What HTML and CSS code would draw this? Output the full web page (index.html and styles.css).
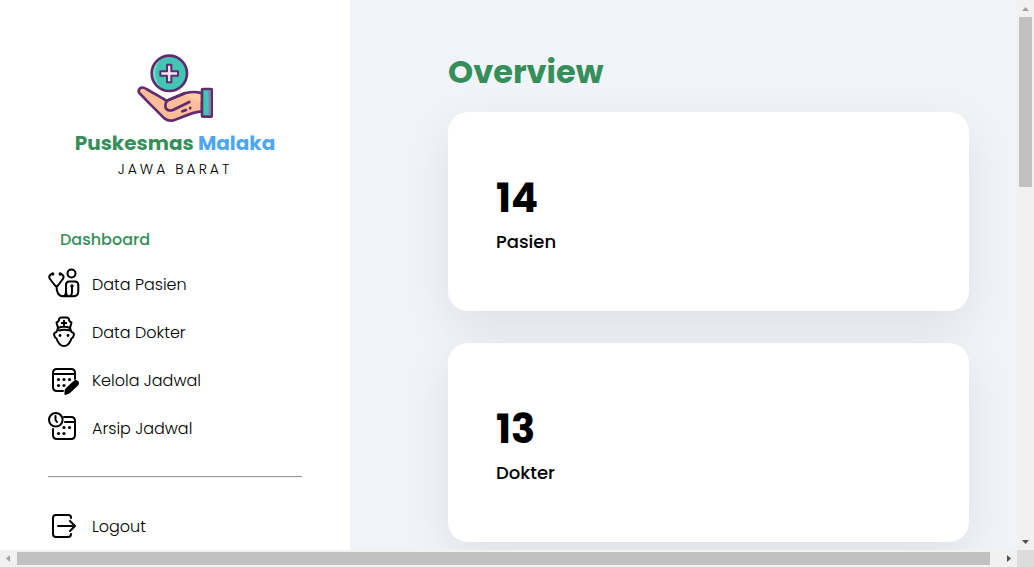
FILE: index.html
```html
<!DOCTYPE html>
<html lang="id">
<head>
<meta charset="utf-8">
<title>Puskesmas Malaka</title>
<link rel="stylesheet" href="styles.css">
</head>
<body>
<div class="frame">
  <div class="page">
    <aside class="sidebar">
      <header class="brand">
        <svg class="logo" viewBox="36 24 228 210" fill="none" stroke="#5f2c6d" stroke-width="8" stroke-linecap="round" stroke-linejoin="round" aria-hidden="true">
          <circle cx="133" cy="85" r="53" fill="#43c5b6"/>
          <path d="M105 46A48 48 0 0 0 105 124A60 60 0 0 1 105 46Z" fill="#7fdccc" stroke="none"/>
          <path d="M126 59h13v20h20v13h-20v20h-13V92h-20V79h20Z" fill="#f3e4f5" stroke-width="6"/>
          <path d="M45 130C51 125 58 128 64 132L108 157C114 160 120 164 124 168L180 145Q207 138 231 145V199C195 201 170 220 145 226Q130 229 118 220L73 175L43 144Q38 137 45 130Z" fill="#ffbd99"/>
          <path d="M180 149Q207 142 227 149V172C210 165 194 158 180 149Z" fill="#ffcda8" stroke="none"/>
          <path d="M193 171L144 195C132 199 121 195 121 182Q121 170 132 164L180 144"/>
          <path d="M172 199l11-4M195 190l1-1"/>
          <path d="M231 134Q231 132 234 132H257Q261 132 261 136V211Q261 215 257 215H234Q231 215 231 211Z" fill="#43c5b6"/>
          <path d="M251 136h6v75h-6Z" fill="#9274ad" stroke="none"/>
        </svg>
        <h2 class="brand-name">Puskesmas <span class="brand-accent">Malaka</span></h2>
        <p class="brand-region">JAWA BARAT</p>
      </header>
      <nav class="menu">
        <a class="menu-title" href="#">Dashboard</a>
        <a class="menu-item" href="#">
          <svg class="icon" viewBox="0 0 32 32" aria-hidden="true">
            <path d="M4.500 6C1.500 6 0.500 9 2 11L7 17.500Q8.500 19 10 17.500L14.800 11C16.500 9 15 6 12.300 6"/>
            <path d="M8.500 18.500C8.500 25 11 28.300 15.500 28.300H25Q30.300 28.300 30.300 23.500V17Q30.300 13.500 27 13.500H21Q18 13.500 18 17V23Q18 28.300 21 28.300Q24 28.300 24 23V18M15.500 28.300Q18 27.500 18 23"/>
            <circle cx="23.500" cy="5.500" r="4"/>
            <circle class="dot" cx="24" cy="18" r="1.700"/><circle class="dot" cx="4.700" cy="6" r="1.700"/><circle class="dot" cx="12.300" cy="6" r="1.700"/>
          </svg>
          Data Pasien</a>
        <a class="menu-item" href="#">
          <svg class="icon" viewBox="0 0 32 32" aria-hidden="true">
            <path d="M10 12L8.500 6.500Q11 5.500 11 3.500Q11.500 1.500 13.500 1.500H18.500Q20.500 1.500 21 3.500Q21 5.500 23.500 6.500L22 12Q16 9.500 10 12ZM16 4.800v4.400M13.800 7h4.400"/>
            <path d="M10 12L8.500 16Q5 17 6.500 20Q7 22 8.500 22.500C10 27 13 30 16 30S22 27 23.500 22.500Q25 22 25.500 20Q27 17 23.500 16L22 12M11 14.500Q16 13 22 14.500"/>
            <circle class="dot" cx="12" cy="19.500" r="1.400"/><circle class="dot" cx="20" cy="19.500" r="1.400"/>
          </svg>
          Data Dokter</a>
        <a class="menu-item" href="#">
          <svg class="icon" viewBox="0 0 32 32" aria-hidden="true">
            <path d="M15 27H9Q5 27 5 23V9Q5 5 9 5H23Q27 5 27 9V15M5 10H27"/>
            <circle class="dot" cx="10.500" cy="15.500" r="1.600"/><circle class="dot" cx="16" cy="15.500" r="1.600"/><circle class="dot" cx="21.500" cy="15.500" r="1.600"/>
            <circle class="dot" cx="10.500" cy="21.500" r="1.600"/><circle class="dot" cx="16" cy="21.500" r="1.600"/>
            <path class="dot" d="M16.500 31V27Q16.500 25.500 18 24L25.500 17Q28 15 30 17T30 21.500L22 29Q20.500 30.500 16.500 31Z"/>
          </svg>
          Kelola Jadwal</a>
        <a class="menu-item" href="#">
          <svg class="icon" viewBox="0 0 32 32" aria-hidden="true">
            <circle cx="7.800" cy="7.800" r="6.800"/>
            <path d="M7.500 4V8L9 10M16 5H23Q27 5 27 9V23Q27 27 23 27H9Q5 27 5 23V17M17 10H27"/>
            <circle class="dot" cx="16" cy="15.500" r="1.600"/><circle class="dot" cx="21.500" cy="15.500" r="1.600"/>
            <circle class="dot" cx="10.500" cy="21.500" r="1.600"/><circle class="dot" cx="16" cy="21.500" r="1.600"/>
          </svg>
          Arsip Jadwal</a>
        <hr class="divider">
        <a class="menu-item" href="#">
          <svg class="icon" viewBox="0 0 32 32" aria-hidden="true">
            <path d="M23 8V7.500Q23 5 20.500 5H8Q5 5 5 8V24Q5 27 8 27H20Q23 27 23 24M10 16H27M22 11L27 16L22 21"/>
          </svg>
          Logout</a>
      </nav>
    </aside>
    <main class="content">
      <h1 class="heading">Overview</h1>
      <section class="card"><strong class="count">14</strong><span class="label">Pasien</span></section>
      <section class="card"><strong class="count">13</strong><span class="label">Dokter</span></section>
    </main>
  </div>
  <div class="bar bar-vertical" aria-hidden="true">
    <svg class="arrow" viewBox="0 0 17 17"><path fill="#a3a3a3" d="M5 11L8.500 7L12 11Z"/></svg>
    <div class="track"><div class="thumb"></div></div>
    <svg class="arrow" viewBox="0 0 17 17"><path fill="#505050" d="M5 7L8.500 11L12 7Z"/></svg>
  </div>
  <div class="bar bar-horizontal" aria-hidden="true">
    <svg class="arrow" viewBox="0 0 17 17"><path fill="#a3a3a3" d="M10 5L6 8.500L10 12Z"/></svg>
    <div class="track"><div class="thumb"></div></div>
    <svg class="arrow" viewBox="0 0 17 17"><path fill="#505050" d="M7 5L11 8.500L7 12Z"/></svg>
  </div>
  <div class="corner"></div>
</div>
</body>
</html>
```
FILE: styles.css
```css
* {
  box-sizing: border-box;
  margin: 0;
  padding: 0;
}

body {
  font-family: Poppins, Inter, "Open Sans", sans-serif;
  font-size: 16px;
  color: #000;
}

.frame {
  display: grid;
  grid-template-columns: minmax(0, 1fr) 17px;
  grid-template-rows: minmax(0, 1fr) 17px;
  height: 100vh;
}

.page {
  display: flex;
  overflow: hidden;
  background: #f0f4f9;
}

.sidebar {
  flex: 0 0 350px;
  padding: 52px 48px 0;
  background: #fff;
}

.brand {
  display: flex;
  flex-direction: column;
  align-items: center;
}

.logo {
  width: 76px;
  height: 72px;
}

.brand-name {
  font-size: 20px;
  font-weight: 700;
  line-height: 38px;
  white-space: nowrap;
  color: #368f5b;
}

.brand-accent {
  color: #4da6f0;
}

.brand-region {
  font-size: 14px;
  font-weight: 300;
  line-height: 14px;
  letter-spacing: 3px;
}

.menu {
  display: flex;
  flex-direction: column;
  margin-top: 52px;
}

.menu-title {
  padding: 0 12px;
  font-weight: 500;
  line-height: 24px;
  color: #368f5b;
  text-decoration: none;
}

.menu-item {
  display: flex;
  align-items: center;
  gap: 12px;
  height: 32px;
  margin-top: 16px;
  font-weight: 300;
  color: #000;
  text-decoration: none;
}

.icon {
  width: 32px;
  height: 32px;
  fill: none;
  stroke: #000;
  stroke-width: 2;
  stroke-linecap: round;
  stroke-linejoin: round;
}

.dot {
  fill: #000;
  stroke: none;
}

.divider {
  margin: 32px 0 16px;
  border: 0;
  border-top: 1px solid #9a9a9a;
  border-bottom: 1px solid #eee;
}

.content {
  flex: 1;
  display: flex;
  flex-direction: column;
  padding: 48px 48px 0 98px;
}

.heading {
  margin-bottom: 16px;
  font-size: 32px;
  font-weight: 700;
  line-height: 48px;
  color: #368f5b;
}

.card {
  display: flex;
  flex-direction: column;
  margin-bottom: 32px;
  padding: 56px 48px;
  border-radius: 20px;
  background: #fff;
  box-shadow: 0 16px 48px rgba(0, 0, 0, 0.08);
}

.count {
  font-size: 40px;
  font-weight: 700;
  line-height: 60px;
}

.label {
  font-size: 18px;
  font-weight: 500;
  line-height: 27px;
}

.bar {
  display: flex;
  background: #f1f1f1;
}

.bar-vertical {
  flex-direction: column;
}

.arrow {
  flex: none;
  width: 17px;
  height: 17px;
}

.track {
  display: flex;
  flex: 1;
  padding: 0 2px;
}

.bar-horizontal .track {
  padding: 2px 0;
}

.thumb {
  width: 100%;
  height: 33%;
  background: #c1c1c1;
}

.bar-horizontal .thumb {
  width: 99%;
  height: 100%;
}

.corner {
  background: #dcdcdc;
}
```
